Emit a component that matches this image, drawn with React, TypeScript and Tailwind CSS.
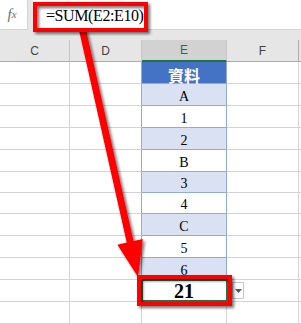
import React from 'react';

type Cell = { v: string; kind: 'head' | 'blue' | 'white' | 'sel' | 'none'; h: string };

const rows: Cell[] = [
  { v: '資料', kind: 'head', h: 'h-[22px]' },
  { v: 'A', kind: 'blue', h: 'h-[22px]' },
  { v: '1', kind: 'white', h: 'h-[22px]' },
  { v: '2', kind: 'blue', h: 'h-[22px]' },
  { v: 'B', kind: 'white', h: 'h-[22px]' },
  { v: '3', kind: 'blue', h: 'h-[21px]' },
  { v: '4', kind: 'white', h: 'h-[21px]' },
  { v: 'C', kind: 'blue', h: 'h-[22px]' },
  { v: '5', kind: 'white', h: 'h-[22px]' },
  { v: '6', kind: 'blue', h: 'h-[22px]' },
  { v: '21', kind: 'sel', h: 'h-[22px]' },
  { v: '', kind: 'none', h: 'h-[22px]' },
];

const eClass = (kind: Cell['kind']) => {
  if (kind === 'head')
    return 'bg-[#4472c4] text-white font-bold text-[16px] leading-[16px] border-r border-b border-[#8eaadb] font-["Noto_Sans_CJK_TC",sans-serif]';
  if (kind === 'blue') return 'bg-[#d9e1f2] text-[14px] leading-[14px] pb-px border-r border-b border-[#8eaadb]';
  if (kind === 'white') return 'bg-white text-[14px] leading-[14px] pb-px border-r border-b border-[#8eaadb]';
  if (kind === 'sel') return 'relative bg-white text-[20px] leading-[20px] font-bold border-r border-b border-[#d4d4d4]';
  return 'border-r border-b border-[#d4d4d4]';
};

const Row = ({ row }: { row: Cell }) => {
  const inTable = row.kind !== 'sel' && row.kind !== 'none';
  return (
    <div className={`flex ${row.h}`}>
      <div className="w-[70px] shrink-0 border-r border-b border-[#d4d4d4]" />
      <div
        className={`w-[72px] shrink-0 border-r border-b border-[#d4d4d4] ${inTable ? 'border-r-[#8eaadb]' : ''}`}
      />
      <div className={`w-[85px] shrink-0 flex items-end justify-center text-black ${eClass(row.kind)}`}>
        {row.v}
        {row.kind === 'sel' && (
          <>
            <div className="absolute -left-px -top-px w-[87px] h-[23px] border-2 border-[#217346]" />
            <div className="absolute left-[90px] top-[2px] w-[12px] h-[17px] bg-white border border-[#c6c6c6] flex items-center justify-center">
              <svg width="7" height="4" viewBox="0 0 7 4">
                <path d="M0 0 L7 0 L3.5 4 Z" fill="#555" />
              </svg>
            </div>
          </>
        )}
      </div>
      <div className="w-[72px] shrink-0 border-r border-b border-[#d4d4d4]" />
      <div className="flex-1 border-b border-[#d4d4d4]" />
    </div>
  );
};

const App = () => {
  return (
    <div className='relative w-[301px] h-[324px] overflow-hidden bg-white font-["Liberation_Serif",serif]'>
      {/* formula bar */}
      <div className="flex h-[40px] bg-[#e6e6e6]">
        <div className="w-[28px] h-[30px] bg-white border-r border-b border-[#d5d5d5] flex items-center justify-center pr-[3px] text-[#6e6e6e] italic text-[15px] leading-none">
          f<span className="text-[11px]">x</span>
        </div>
        <div className="ml-[5px] flex-1 h-[30px] bg-white border-b border-[#d5d5d5] flex items-center pl-[13px] pt-[2px] text-[16px] tracking-[-0.4px] text-black">
          =SUM(E2:E10)
        </div>
      </div>

      {/* column headers */}
      <div className='flex h-[22px] bg-[#e6e6e6] text-[12px] font-["Liberation_Sans",sans-serif] text-[#444]'>
        <div className="w-[70px] shrink-0 flex items-center justify-center border-r border-b border-[#c6c6c6] border-b-[#ababab]">C</div>
        <div className="w-[72px] shrink-0 flex items-center justify-center border-r border-b border-[#c6c6c6] border-b-[#ababab]">D</div>
        <div className="w-[85px] shrink-0 flex items-center justify-center bg-[#d2d2d2] text-[#217346] border-r border-[#c6c6c6] border-b-2 border-b-[#217346]">E</div>
        <div className="w-[72px] shrink-0 flex items-center justify-center border-r border-b border-[#ababab]">F</div>
        <div className="flex-1 border-b border-[#ababab]" />
      </div>

      {rows.map((r, i) => (
        <Row key={i} row={r} />
      ))}

      {/* red annotations */}
      <svg className="absolute inset-0 pointer-events-none" width="301" height="324" viewBox="0 0 301 324">
        <defs>
          <filter id="sh" x="-20%" y="-20%" width="140%" height="140%">
            <feDropShadow dx="2" dy="2" stdDeviation="1.8" floodColor="#000" floodOpacity="0.55" />
          </filter>
        </defs>
        <polygon
          points="79.1,30.8 85.9,29.2 133.5,241.1 142.8,239 138,277 117.4,244.7 126.7,242.6"
          fill="#ff0000"
          filter="url(#sh)"
        />
        <rect x="35" y="4" width="111" height="26" fill="none" stroke="#ff0000" strokeWidth="4" filter="url(#sh)" />
        <rect x="139" y="277" width="91" height="27" fill="none" stroke="#ff0000" strokeWidth="4" filter="url(#sh)" />
      </svg>
    </div>
  );
};

export default App;
